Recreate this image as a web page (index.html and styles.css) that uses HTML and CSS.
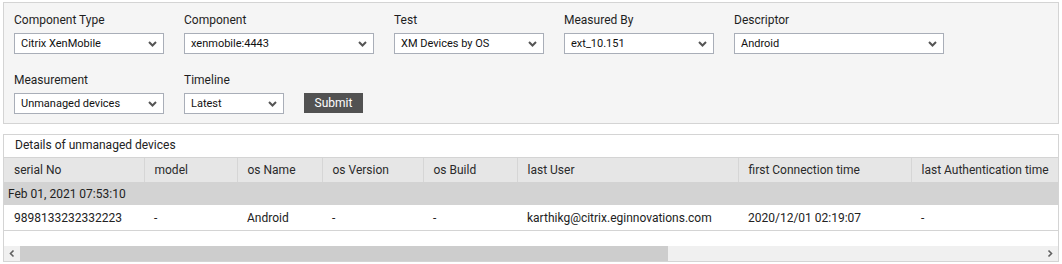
FILE: index.html
```html
<!DOCTYPE html>
<html lang="en">
<head>
    <meta charset="UTF-8">
    <title>Unmanaged devices</title>
    <link rel="stylesheet" href="styles.css">
</head>
<body>
    <div class="filters">
        <div class="filter-row">
            <div class="field">
                <label>Component Type</label>
                <div class="select w150"><span>Citrix XenMobile</span><svg class="chev" width="9" height="6" viewBox="0 0 9 6"><path d="M1 1l3.5 3.5L8 1" /></svg></div>
            </div>
            <div class="field">
                <label>Component</label>
                <div class="select w190"><span>xenmobile:4443</span><svg class="chev" width="9" height="6" viewBox="0 0 9 6"><path d="M1 1l3.5 3.5L8 1" /></svg></div>
            </div>
            <div class="field">
                <label>Test</label>
                <div class="select w150"><span>XM Devices by OS</span><svg class="chev" width="9" height="6" viewBox="0 0 9 6"><path d="M1 1l3.5 3.5L8 1" /></svg></div>
            </div>
            <div class="field">
                <label>Measured By</label>
                <div class="select w150"><span>ext_10.151</span><svg class="chev" width="9" height="6" viewBox="0 0 9 6"><path d="M1 1l3.5 3.5L8 1" /></svg></div>
            </div>
            <div class="field">
                <label>Descriptor</label>
                <div class="select w210"><span>Android</span><svg class="chev" width="9" height="6" viewBox="0 0 9 6"><path d="M1 1l3.5 3.5L8 1" /></svg></div>
            </div>
        </div>
        <div class="filter-row">
            <div class="field">
                <label>Measurement</label>
                <div class="select w150"><span>Unmanaged devices</span><svg class="chev" width="9" height="6" viewBox="0 0 9 6"><path d="M1 1l3.5 3.5L8 1" /></svg></div>
            </div>
            <div class="field">
                <label>Timeline</label>
                <div class="select w100"><span>Latest</span><svg class="chev" width="9" height="6" viewBox="0 0 9 6"><path d="M1 1l3.5 3.5L8 1" /></svg></div>
            </div>
            <button class="submit">Submit</button>
        </div>
    </div>

    <div class="details">
        <div class="details-title">Details of unmanaged devices</div>
        <table class="grid">
            <colgroup>
                <col style="width:140px">
                <col style="width:93px">
                <col style="width:85px">
                <col style="width:101px">
                <col style="width:94px">
                <col style="width:221px">
                <col style="width:173px">
                <col>
            </colgroup>
            <thead>
                <tr>
                    <th>serial No</th>
                    <th>model</th>
                    <th>os Name</th>
                    <th>os Version</th>
                    <th>os Build</th>
                    <th>last User</th>
                    <th>first Connection time</th>
                    <th>last Authentication time</th>
                </tr>
            </thead>
            <tbody>
                <tr class="group-row">
                    <td colspan="8">Feb 01, 2021 07:53:10</td>
                </tr>
                <tr class="data-row">
                    <td>9898133232332223</td>
                    <td>-</td>
                    <td>Android</td>
                    <td>-</td>
                    <td>-</td>
                    <td>karthikg@citrix.eginnovations.com</td>
                    <td>2020/12/01 02:19:07</td>
                    <td>-</td>
                </tr>
            </tbody>
        </table>
        <div class="hscroll">
            <svg class="arrow" width="16" height="15" viewBox="0 0 16 15"><path d="M9.5 4.5L6.5 7.5l3 3" /></svg>
            <div class="thumb"></div>
            <svg class="arrow right" width="16" height="15" viewBox="0 0 16 15"><path d="M6.5 4.5l3 3-3 3" /></svg>
        </div>
    </div>
</body>
</html>
```

FILE: styles.css
```css
body {
    margin: 0;
    padding: 2px 3px 0;
    font-family: 'Roboto', 'Liberation Sans', sans-serif;
    color: #222;
    background-color: white;
}
.filters {
    background-color: #f5f5f5;
    border: 1px solid #d4d4d4;
    padding: 9px 10px 9px;
    display: flex;
    flex-direction: column;
    gap: 18px;
}
.filter-row {
    display: flex;
    align-items: flex-end;
    gap: 20px;
}
.field label {
    display: block;
    font-size: 12px;
    line-height: 16px;
    margin-bottom: 5px;
    color: #1e1e1e;
}
.select {
    box-sizing: border-box;
    height: 21px;
    background-color: white;
    border: 1px solid #a9aeb8;
    display: flex;
    align-items: center;
    justify-content: space-between;
    padding: 0 6px 0 6px;
    font-size: 11px;
    color: #111;
}
.chev {
    fill: none;
    stroke: #555;
    stroke-width: 2;
}
.w100 { width: 100px; }
.w150 { width: 150px; }
.w190 { width: 190px; }
.w210 { width: 210px; }
.submit {
    height: 20px;
    width: 59px;
    margin-bottom: 1px;
    border: none;
    background-color: #525252;
    color: white;
    font-family: 'Roboto', 'Liberation Sans', sans-serif;
    font-size: 12px;
    padding: 0;
}
.details {
    margin-top: 10px;
    border: 1px solid #d4d4d4;
    background-color: white;
}
.details-title {
    height: 22px;
    line-height: 21px;
    padding-left: 11px;
    font-size: 12px;
}
.grid {
    width: 100%;
    border-collapse: collapse;
    table-layout: fixed;
    font-size: 12px;
}
.grid th {
    height: 24px;
    background-color: #e6e6e6;
    border-top: 1px solid #d4d4d4;
    border-left: 1px solid #d6d6d6;
    font-weight: normal;
    text-align: left;
    padding: 0 10px;
    color: #2a2a2a;
    white-space: nowrap;
    overflow: hidden;
}
.grid th:first-child {
    border-left: none;
}
.group-row td {
    height: 23px;
    background-color: #d3d3d3;
    padding: 0 4px;
}
.data-row td {
    height: 25px;
    padding: 0 10px;
    border-bottom: 1px solid #d4d4d4;
    white-space: nowrap;
}
.hscroll {
    margin-top: 15px;
    height: 15px;
    background-color: #f0f0f0;
    display: flex;
    align-items: center;
}
.hscroll .arrow {
    fill: none;
    stroke: #606060;
    stroke-width: 1.6;
}
.hscroll .right {
    margin-left: auto;
}
.thumb {
    width: 648px;
    height: 15px;
    background-color: #cdcdcd;
}
```
